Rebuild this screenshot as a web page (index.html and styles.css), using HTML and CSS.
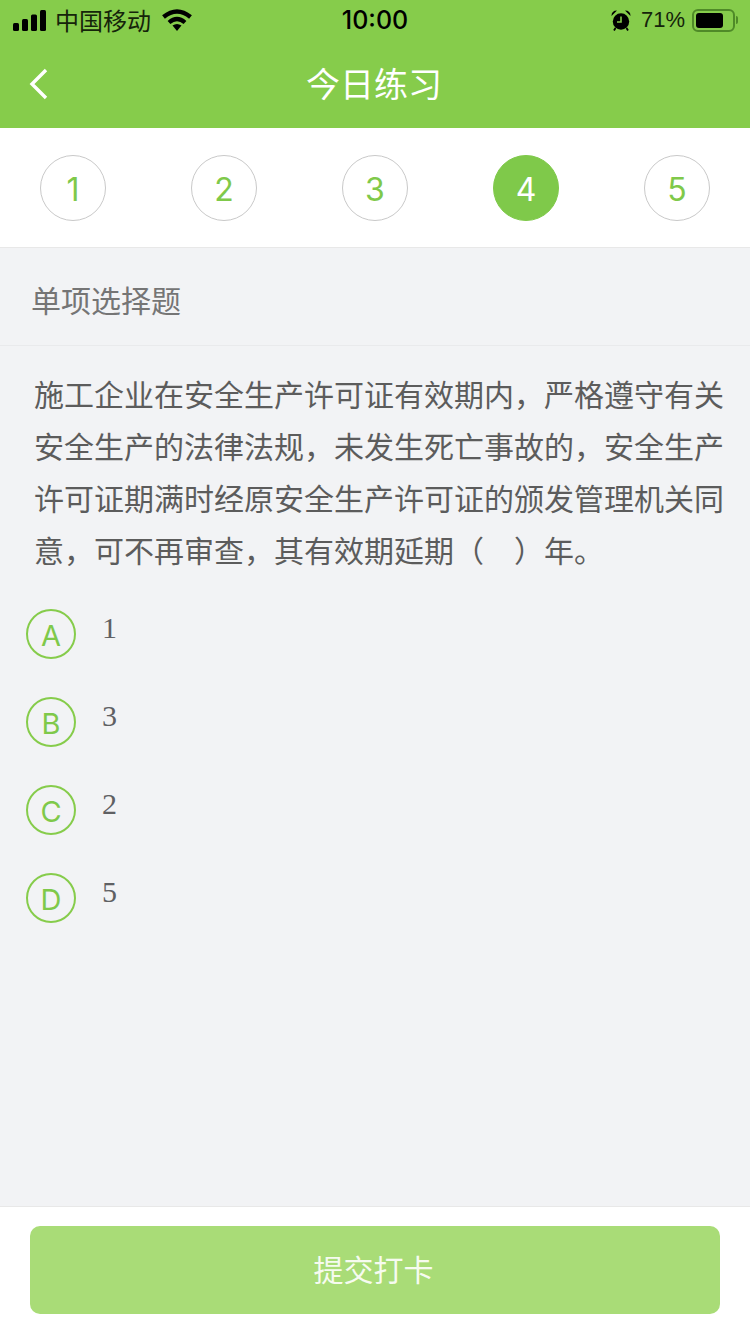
FILE: index.html
```html
<!DOCTYPE html>
<html lang="zh">
<head>
    <meta charset="UTF-8">
    <meta name="viewport" content="width=device-width, initial-scale=1.0">
    <title>今日练习</title>
    <link rel="stylesheet" href="styles.css">
</head>
<body>
    <div class="page">
        <header class="top">
            <div class="status">
                <div class="status-left">
                    <svg class="signal" width="33" height="21" viewBox="0 0 33 21">
                        <rect x="0" y="13" width="6" height="8" rx="1.5"/>
                        <rect x="9" y="9" width="6" height="12" rx="1.5"/>
                        <rect x="18" y="4.5" width="6" height="16.5" rx="1.5"/>
                        <rect x="27" y="0" width="6" height="21" rx="1.5"/>
                    </svg>
                    <span class="carrier">中国移动</span>
                    <svg class="wifi" width="30" height="22" viewBox="0 0 30 22">
                        <path d="M1.5 8 Q15 -3 28.5 8" fill="none" stroke="#000" stroke-width="4.4"/>
                        <path d="M7 13.5 Q15 6.5 23 13.5" fill="none" stroke="#000" stroke-width="4.2"/>
                        <path d="M10.5 16.5 Q15 13.5 19.5 16.5 L15 22 Z"/>
                    </svg>
                </div>
                <div class="clock">10:00</div>
                <div class="status-right">
                    <svg class="alarm" width="20" height="21" viewBox="0 0 20 21">
                        <circle cx="10" cy="11.5" r="8.2"/>
                        <path d="M0.5 6 Q0.5 0.5 6 0.5 Z M19.5 6 Q19.5 0.5 14 0.5 Z"/>
                        <path d="M10 6.5 V12 H6" fill="none" stroke="#86cc4b" stroke-width="1.6"/>
                        <path d="M4.5 18 L3 20.5 M15.5 18 L17 20.5" stroke="#000" stroke-width="1.8"/>
                    </svg>
                    <span class="percent">71%</span>
                    <div class="battery"><div class="battery-fill"></div></div>
                    <div class="battery-tip"></div>
                </div>
            </div>
            <div class="nav">
                <svg class="back" width="20" height="32" viewBox="0 0 20 32">
                    <path d="M17 2 L3 16 L17 30" fill="none" stroke="#fff" stroke-width="3.4"/>
                </svg>
                <h1 class="title">今日练习</h1>
            </div>
        </header>

        <div class="steps">
            <div class="step">1</div>
            <div class="step">2</div>
            <div class="step">3</div>
            <div class="step active">4</div>
            <div class="step">5</div>
        </div>

        <main class="content">
            <div class="kind">单项选择题</div>
            <p class="question">施工企业在安全生产许可证有效期内，严格遵守有关安全生产的法律法规，未发生死亡事故的，安全生产许可证期满时经原安全生产许可证的颁发管理机关同意，可不再审查，其有效期延期（　）年。</p>
            <div class="options">
                <div class="option"><div class="letter">A</div><div class="answer">1</div></div>
                <div class="option"><div class="letter">B</div><div class="answer">3</div></div>
                <div class="option"><div class="letter">C</div><div class="answer">2</div></div>
                <div class="option"><div class="letter">D</div><div class="answer">5</div></div>
            </div>
        </main>

        <footer class="bottom">
            <button class="submit">提交打卡</button>
        </footer>
    </div>
</body>
</html>
```
FILE: styles.css
```css
* {
    box-sizing: border-box;
}
body {
    margin: 0;
    font-family: "Liberation Sans", "Noto Sans CJK SC", sans-serif;
    background-color: #f2f3f5;
}
.page {
    width: 750px;
    height: 1334px;
    display: flex;
    flex-direction: column;
    overflow: hidden;
}
.top {
    height: 128px;
    background-color: #86cc4b;
    flex-shrink: 0;
}
.status {
    height: 40px;
    padding: 0 12px 0 13px;
    display: flex;
    align-items: center;
    justify-content: space-between;
    position: relative;
    color: #000;
}
.status-left, .status-right {
    display: flex;
    align-items: center;
}
.carrier {
    font-size: 24px;
    margin-top: -2px;
    margin-left: 9px;
    color: #15240a;
}
.wifi {
    margin-left: 11px;
}
.clock {
    position: absolute;
    left: 0;
    right: 0;
    text-align: center;
    font-size: 25px;
    font-weight: 500;
    font-family: Inter, sans-serif;
    color: #000;
}
.percent {
    font-size: 22px;
    margin-left: 10px;
    color: #15240a;
}
.battery {
    width: 43px;
    height: 23px;
    margin-left: 7px;
    border: 2px solid #4f8a28;
    border-radius: 6px;
    padding: 2px;
}
.battery-fill {
    width: 27px;
    height: 15px;
    background-color: #000;
    border-radius: 3px;
}
.battery-tip {
    width: 2px;
    height: 8px;
    margin-left: 1px;
    background-color: #4f8a28;
    border-radius: 0 2px 2px 0;
}
.nav {
    height: 88px;
    display: flex;
    align-items: center;
    justify-content: center;
    position: relative;
}
.back {
    position: absolute;
    left: 29px;
    top: 28px;
}
.title {
    margin: -3px 2px 0 0;
    font-size: 34px;
    font-weight: 400;
    color: #fff;
}
.steps {
    height: 120px;
    background-color: #fff;
    border-bottom: 1px solid #e8e8e8;
    padding: 27px 40px 0;
    display: flex;
    justify-content: space-between;
    flex-shrink: 0;
}
.step {
    width: 66px;
    height: 66px;
    padding-top: 2px;
    border: 1px solid #c9c9c9;
    border-radius: 50%;
    color: #7fc94a;
    font-family: Inter, sans-serif;
    font-size: 32px;
    display: flex;
    align-items: center;
    justify-content: center;
}
.step.active {
    background-color: #7fc94a;
    border-color: #7fc94a;
    color: #fff;
}
.content {
    flex: 1;
}
.kind {
    height: 98px;
    padding: 5px 0 0 31px;
    display: flex;
    align-items: center;
    border-bottom: 1px solid #e9eaec;
    font-size: 30px;
    color: #757575;
}
.question {
    margin: 0;
    padding: 24px 21px 0 34px;
    font-size: 30px;
    line-height: 52px;
    color: #5c5c5c;
}
.options {
    margin-top: 31px;
    padding-left: 26px;
}
.option {
    height: 88px;
    display: flex;
}
.letter {
    width: 50px;
    height: 50px;
    padding-top: 2px;
    border: 2px solid #86cc4b;
    border-radius: 50%;
    color: #7fc94a;
    font-family: Inter, sans-serif;
    font-size: 29px;
    display: flex;
    align-items: center;
    justify-content: center;
}
.answer {
    margin-left: 26px;
    font-family: "Liberation Serif", serif;
    font-size: 30px;
    line-height: 38px;
    color: #5f6063;
}
.bottom {
    height: 128px;
    background-color: #fff;
    border-top: 1px solid #e8e8e8;
    padding: 19px 30px 0;
    flex-shrink: 0;
}
.submit {
    width: 690px;
    height: 88px;
    padding: 0 3px 4px 0;
    border: none;
    border-radius: 10px;
    background-color: #a9dc77;
    color: #f6fbf0;
    font-size: 30px;
    font-family: inherit;
}
```
